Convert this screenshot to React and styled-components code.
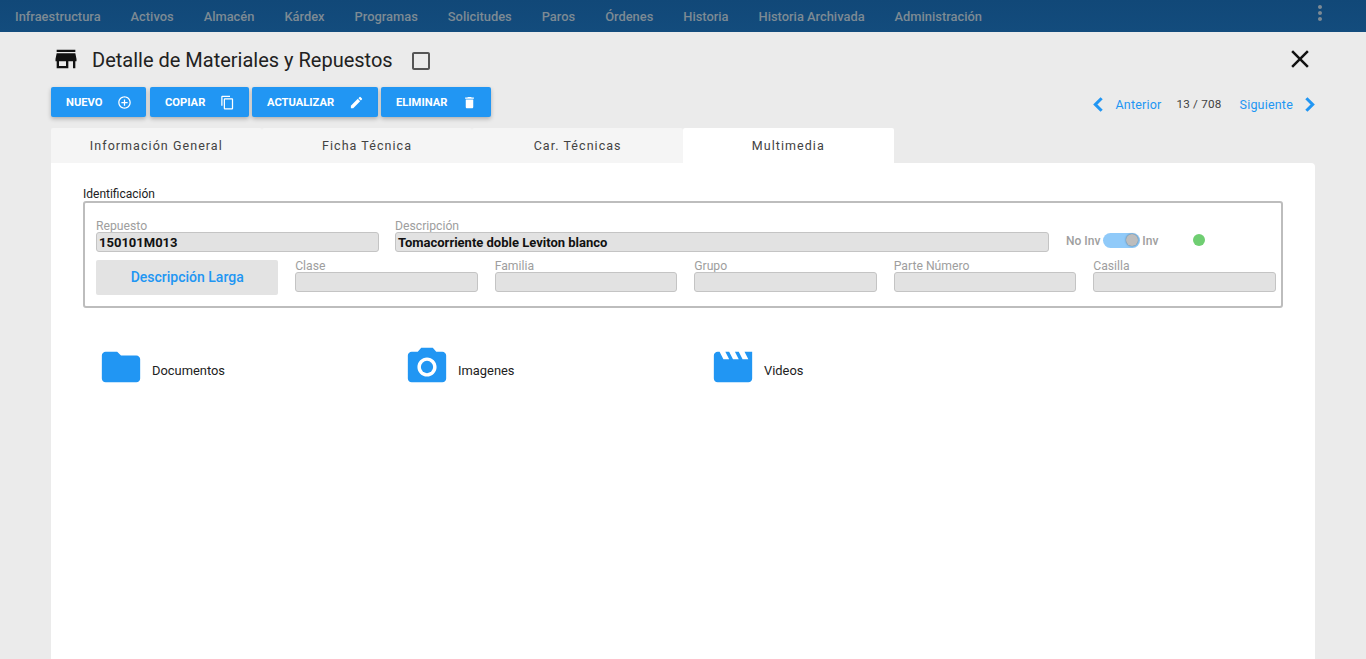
import React from 'react';
import styled, { createGlobalStyle } from 'styled-components';
import { ChevronLeft, ChevronRight } from 'lucide-react';
import {
  MdStore,
  MdCheckBoxOutlineBlank,
  MdClose,
  MdAddCircleOutline,
  MdContentCopy,
  MdEdit,
  MdDelete,
  MdMoreVert,
  MdFolder,
  MdCameraAlt,
  MdMovie,
} from 'react-icons/md';

const GlobalStyle = createGlobalStyle`
  html, body {
    margin: 0;
    height: 100%;
    overflow: hidden;
    background: #ebebeb;
    font-family: Roboto, "Liberation Sans", sans-serif;
  }
  * {
    box-sizing: border-box;
  }
`;

const Page = styled.div`
  display: flex;
  flex-direction: column;
  height: 659px;
`;

const TopBar = styled.nav`
  display: flex;
  align-items: center;
  flex: 0 0 32px;
  padding: 0 34px 0 15px;
  background: linear-gradient(#114878, #134c7d);
`;

const NavItem = styled.span`
  margin-right: 30px;
  color: #7d8a94;
  font-size: 12.88px;
  font-weight: 500;
`;

const NavMore = styled.span`
  display: flex;
  margin-left: auto;
  margin-top: -6px;
  color: #7d8a94;
  font-size: 24px;
`;

const Main = styled.main`
  display: flex;
  flex: 1;
  flex-direction: column;
  padding: 0 51px;
  min-height: 0;
`;

const TitleRow = styled.div`
  display: flex;
  align-items: center;
  height: 55px;
  padding: 2px 0 0 1px;
`;

const StoreIcon = styled.span`
  display: flex;
  margin-top: -4px;
  color: #111;
  font-size: 28px;
`;

const Title = styled.h1`
  margin: -2px 0 0 12px;
  color: #212121;
  font-size: 20px;
  font-weight: 400;
`;

const TitleCheck = styled.span`
  display: flex;
  margin-left: 16px;
  color: #555;
  font-size: 24px;
`;

const CloseButton = styled.span`
  display: flex;
  margin-left: auto;
  margin-top: -4px;
  color: #111;
  font-size: 30px;
`;

const ToolRow = styled.div`
  display: flex;
  align-items: center;
  height: 30px;
`;

const ActionButton = styled.button`
  display: flex;
  align-items: center;
  justify-content: space-between;
  width: ${({ $width }) => $width}px;
  height: 30px;
  margin-right: ${({ $gap }) => $gap}px;
  padding: 0 14px 0 15px;
  border: 0;
  border-radius: 2px;
  background: #2196f3;
  box-shadow: 0 2px 4px rgba(0, 0, 0, 0.25);
  color: #fff;
  font-family: inherit;
  font-size: 11.2px;
  font-weight: 700;

  svg {
    font-size: 15px;
  }
`;

const Pager = styled.div`
  display: flex;
  align-items: center;
  gap: 4px;
  margin-left: auto;
  margin-right: -7px;
  padding-top: 5px;
  color: #2196f3;
  font-size: 12.5px;
  letter-spacing: 0.2px;
`;

const PagerCount = styled.span`
  margin: -2px 14px 0 11px;
  color: #424242;
  font-size: 11.7px;
`;

const Tabs = styled.div`
  display: flex;
  height: 35px;
  margin-top: 11px;
`;

const Tab = styled.div`
  display: flex;
  align-items: center;
  justify-content: center;
  width: 210.67px;
  border-radius: 2px 2px 0 0;
  background: ${({ $active }) => ($active ? '#fff' : '#f5f5f5')};
  color: #424242;
  font-size: 12.5px;
  letter-spacing: 1.05px;
`;

const Panel = styled.section`
  flex: 1;
  padding: 24px 32px 0;
  border-radius: 0 4px 0 0;
  background: #fff;
`;

const GroupLabel = styled.div`
  height: 15px;
  color: #212121;
  font-size: 12px;
  line-height: 15px;
`;

const Group = styled.div`
  display: flex;
  flex-direction: column;
  gap: 8px;
  height: 107px;
  margin-top: -1px;
  padding: 18px 5px 0 11px;
  border: 2px solid #bdbdbd;
  border-radius: 3px;
`;

const FieldRow = styled.div`
  display: flex;
  align-items: flex-end;
  gap: ${({ $gap }) => $gap}px;
`;

const Field = styled.div`
  display: flex;
  flex: ${({ $width }) => ($width ? `0 0 ${$width}px` : 1)};
  flex-direction: column;
`;

const FieldLabel = styled.label`
  height: 11px;
  color: #9e9e9e;
  font-size: 12.2px;
  line-height: 11px;
`;

const FieldValue = styled.div`
  height: 20px;
  padding: 0 2px;
  border: 1px solid #c4c4c4;
  border-radius: 3px;
  background: #e2e2e2;
  color: #111;
  font-size: 13px;
  font-weight: 700;
  line-height: 19px;
`;

const LongButton = styled.div`
  display: flex;
  flex: 0 0 182.4px;
  align-items: center;
  justify-content: center;
  height: 35px;
  margin-bottom: -3px;
  padding-bottom: 2px;
  border-radius: 2px;
  background: #e3e3e3;
  color: #2196f3;
  font-size: 14px;
  font-weight: 500;
`;

const InvSwitch = styled.div`
  display: flex;
  align-items: center;
  height: 22px;
  margin-left: 1px;
  color: #9e9e9e;
  font-size: 12px;
  font-weight: 500;
`;

const Track = styled.span`
  position: relative;
  width: 37px;
  height: 15px;
  margin: -2px 2px 0 3px;
  border-radius: 8px;
  background: #90caf9;
`;

const Thumb = styled.span`
  position: absolute;
  top: 1px;
  right: 2px;
  width: 12px;
  height: 12px;
  border-radius: 50%;
  background: #bdbdbd;
  box-shadow: 0 0 2px rgba(0, 0, 0, 0.5);
`;

const StatusDot = styled.span`
  width: 12px;
  height: 12px;
  margin: -2px 0 0 35px;
  border-radius: 50%;
  background: #6fce72;
`;

const MediaRow = styled.div`
  display: flex;
  margin-top: 43px;
  padding-left: 19px;
`;

const MediaItem = styled.div`
  display: flex;
  align-items: center;
  width: 306px;
  color: #212121;
  font-size: 12.9px;
`;

const MediaIcon = styled.span`
  display: flex;
  width: 46px;
  height: 46px;
  margin: -7px 8px 0 -4px;
  color: #2196f3;
  font-size: 46px;
`;

const navItems = [
  'Infraestructura',
  'Activos',
  'Almacén',
  'Kárdex',
  'Programas',
  'Solicitudes',
  'Paros',
  'Órdenes',
  'Historia',
  'Historia Archivada',
  'Administración',
];

const actions = [
  { label: 'NUEVO', icon: <MdAddCircleOutline />, width: 95, gap: 4 },
  { label: 'COPIAR', icon: <MdContentCopy />, width: 99, gap: 3 },
  { label: 'ACTUALIZAR', icon: <MdEdit />, width: 126, gap: 3 },
  { label: 'ELIMINAR', icon: <MdDelete />, width: 110, gap: 0 },
];

const tabs = ['Información General', 'Ficha Técnica', 'Car. Técnicas', 'Multimedia'];

const lowerFields = ['Clase', 'Familia', 'Grupo', 'Parte Número', 'Casilla'];

const media = [
  { label: 'Documentos', icon: <MdFolder /> },
  { label: 'Imagenes', icon: <MdCameraAlt /> },
  { label: 'Videos', icon: <MdMovie /> },
];

const App = () => (
  <Page>
    <GlobalStyle />
    <TopBar>
      {navItems.map((item) => (
        <NavItem key={item}>{item}</NavItem>
      ))}
      <NavMore>
        <MdMoreVert />
      </NavMore>
    </TopBar>
    <Main>
      <TitleRow>
        <StoreIcon>
          <MdStore />
        </StoreIcon>
        <Title>Detalle de Materiales y Repuestos</Title>
        <TitleCheck>
          <MdCheckBoxOutlineBlank />
        </TitleCheck>
        <CloseButton>
          <MdClose />
        </CloseButton>
      </TitleRow>
      <ToolRow>
        {actions.map(({ label, icon, width, gap }) => (
          <ActionButton key={label} $width={width} $gap={gap}>
            {label}
            {icon}
          </ActionButton>
        ))}
        <Pager>
          <ChevronLeft size={25} strokeWidth={3} strokeLinecap="butt" strokeLinejoin="miter" />
          Anterior
          <PagerCount>13 / 708</PagerCount>
          Siguiente
          <ChevronRight size={25} strokeWidth={3} strokeLinecap="butt" strokeLinejoin="miter" />
        </Pager>
      </ToolRow>
      <Tabs>
        {tabs.map((tab) => (
          <Tab key={tab} $active={tab === 'Multimedia'}>
            {tab}
          </Tab>
        ))}
      </Tabs>
      <Panel>
        <GroupLabel>Identificación</GroupLabel>
        <Group>
          <FieldRow $gap={16}>
            <Field $width={283}>
              <FieldLabel>Repuesto</FieldLabel>
              <FieldValue>150101M013</FieldValue>
            </Field>
            <Field $width={654}>
              <FieldLabel>Descripción</FieldLabel>
              <FieldValue>Tomacorriente doble Leviton blanco</FieldValue>
            </Field>
            <InvSwitch>
              No Inv
              <Track>
                <Thumb />
              </Track>
              Inv
              <StatusDot />
            </InvSwitch>
          </FieldRow>
          <FieldRow $gap={16.8}>
            <LongButton>Descripción Larga</LongButton>
            {lowerFields.map((field) => (
              <Field key={field}>
                <FieldLabel>{field}</FieldLabel>
                <FieldValue />
              </Field>
            ))}
          </FieldRow>
        </Group>
        <MediaRow>
          {media.map(({ label, icon }) => (
            <MediaItem key={label}>
              <MediaIcon>{icon}</MediaIcon>
              {label}
            </MediaItem>
          ))}
        </MediaRow>
      </Panel>
    </Main>
  </Page>
);

export default App;
